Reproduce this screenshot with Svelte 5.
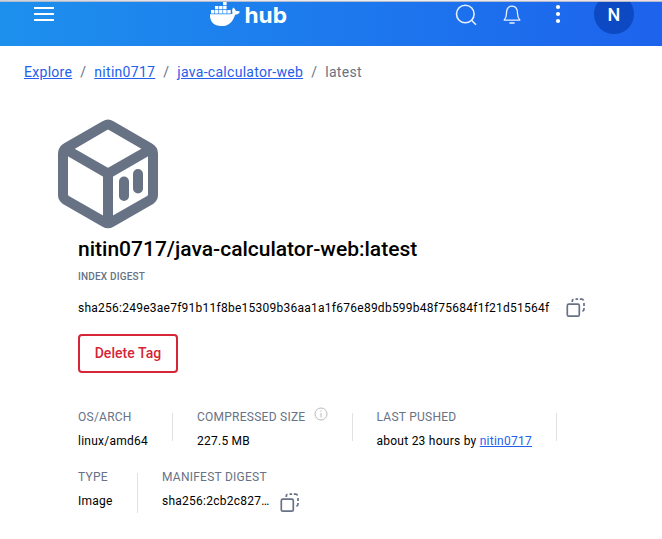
<script>
  const crumbs = ['Explore', 'nitin0717', 'java-calculator-web'];
</script>

{#snippet copyIcon()}
  <svg class="copy" width="20" height="20" viewBox="0 0 20 20" fill="none" stroke="#677285">
    <rect x="1.3" y="6.2" width="12" height="12" rx="1.5" stroke-width="1.7" />
    <path d="M6.3 4V2.8a1.5 1.5 0 0 1 1.2-1.5M9.5 1.2h2.6M13.8 1.2h2a2 2 0 0 1 1.7 1.3M18 5v3M18 10v1a2.2 2.2 0 0 1-1.6 2.2" stroke-width="1.7" />
  </svg>
{/snippet}

<div class="page">
  <div class="edge"></div>
  <header>
    <button class="menu" aria-label="Menu">
      <svg width="20" height="16" viewBox="0 0 20 16" fill="#fff">
        <path d="M0 1h20v2H0zM0 7h20v2H0zM0 13h20v2H0z" />
      </svg>
    </button>
    <div class="logo">
      <svg width="80" height="28" viewBox="0 0 80 28" fill="#fff">
        <path d="M13.1 0h3.5v3.3h-3.5zM5 4h3.4v3.2H5zM9.1 4h3.4v3.2H9.1zM13.1 4h3.5v3.2h-3.5zM1 8h3.4v3.6H1zM5 8h3.4v3.6H5zM9.1 8h3.4v3.6H9.1zM13.1 8h3.5v3.6h-3.5zM17.3 8h3.4v3.6h-3.4z" />
        <path d="M0 12.3h19.5c1.5 0 2.5-.4 3.2-1-.9-1.8-.8-4 .5-5.9 1.6 1 2.4 2.2 2.6 3.7 1.5-.3 3-.1 4.2.7-1 2-2.5 2.9-4.9 2.9C22.6 20.5 18.6 24 11.4 24 3.8 24-.3 20 0 12.3z" />
        <text x="34.5" y="20.5" textLength="42.5" lengthAdjust="spacingAndGlyphs">hub</text>
      </svg>
    </div>
    <nav>
      <svg width="22" height="22" viewBox="0 0 22 22" fill="none" stroke="#e6f0ff" stroke-width="1.6">
        <circle cx="10.3" cy="10" r="8.8" /><path d="M16.3 16l4.7 4.7" />
      </svg>
      <svg class="bell" width="18" height="20" viewBox="0 0 18 20" fill="none" stroke="#e6f0ff" stroke-width="1.3">
        <path d="M1.2 15.2c1.9-2.2 2.3-3.7 2.3-6.6C3.5 3.5 5.2 1.2 9 1.2s5.5 2.3 5.5 7.4c0 2.900.4 4.400 2.300 6.600z" stroke-linejoin="round" />
        <path d="M7 18h4" stroke-width="1.6" stroke-linecap="round" />
      </svg>
      <svg class="dots" width="6" height="20" viewBox="0 0 6 20" fill="#fff">
        <circle cx="3" cy="3" r="2.1" /><circle cx="3" cy="10" r="2.1" /><circle cx="3" cy="17" r="2.1" />
      </svg>
      <div class="avatar">N</div>
    </nav>
  </header>

  <div class="crumbs">
    {#each crumbs as c}<a href="#top">{c}</a><i>/</i>{/each}<span>latest</span>
  </div>

  <main>
    <svg class="cube" width="100" height="110" viewBox="0 0 100 110" fill="none" stroke="#677285" stroke-width="10">
      <path d="M47 7.5Q50 5.8 53 7.5L91 29.5Q95 31.7 95 35.5V77Q95 80 92 82L53 104.3Q50 106 47 104.3L8 82Q5 80 5 77V35.5Q5 31.7 9 29.5Z" />
      <path d="M8 31.5L50 55.7L92 31.5M50 54.5V104.5" />
      <path d="M66 63.5V78M80 56V70.5" stroke-linecap="round" />
    </svg>
    <h1>nitin0717/java-calculator-web:latest</h1>
    <div class="index">INDEX DIGEST</div>
    <div class="digest">
      <span>sha256:249e3ae7f91b11f8be15309b36aa1a1f676e89db599b48f75684f1f21d51564f</span>
      {@render copyIcon()}
    </div>
    <button class="delete">Delete Tag</button>
    <div class="facts">
      <div class="fact os"><b>OS/ARCH</b><p>linux/amd64</p></div>
      <div class="fact size">
        <b>COMPRESSED SIZE
          <svg width="14" height="14" viewBox="0 0 14 14" fill="none" stroke="#bbb">
            <circle cx="7" cy="7" r="6" /><path d="M7 6v4.5M7 3.6v1.2" />
          </svg>
        </b>
        <p>227.5 MB</p>
      </div>
      <div class="fact pushed"><b>LAST PUSHED</b><p>about 23 hours by <a href="#top">nitin0717</a></p></div>
    </div>
    <div class="facts second">
      <div class="fact type"><b>TYPE</b><p>Image</p></div>
      <div class="fact manifest"><b>MANIFEST DIGEST</b><p>sha256:2cb2c827… {@render copyIcon()}</p></div>
    </div>
  </main>
</div>

<style>
  :global(body) { margin: 0; background: #fff; }
  .page { width: 662px; height: 539px; overflow: hidden; font-family: Roboto, sans-serif; color: #000; background: #fff; }
  svg { display: block; flex: none; overflow: visible; }
  button { font: inherit; padding: 0; border: 0; background: none; }
  a { color: #2560ed; text-decoration: underline; }
  .edge { height: 2px; box-sizing: border-box; background: linear-gradient(90deg, #ccd1d8, #ece0ea 25%, #eee 60%, #f3dce4); border-bottom: 1px solid #aebccd; }
  header { height: 44px; display: flex; align-items: flex-start; background: linear-gradient(90deg, #1d90ed, #1d63ed); }
  .menu { margin: 4px 0 0 34px; width: 20px; }
  .logo { margin-left: 156px; }
  .logo text { font: 700 22px Inter, sans-serif; }
  nav { display: flex; align-items: flex-start; margin-left: 165px; padding-top: 2px; }
  .bell { margin: 1px 0 0 26px; }
  .dots { margin: 0 0 0 34px; }
  .avatar { width: 40px; height: 40px; margin: -10px 0 0 33px; border-radius: 50%; background: #0c49c2; color: #fff; font: 500 18px/41px Roboto, sans-serif; text-align: center; clip-path: inset(8px 0 0); }
  .crumbs { height: 20px; padding: 16px 0 0 24px; display: flex; font-size: 14px; line-height: 20px; letter-spacing: .29px; color: #677285; }
  .crumbs i { font-style: normal; margin: 0 8px; }
  main { padding: 36px 0 0 78px; }
  .cube { margin-left: -20px; }
  h1 { margin: 6px 0 0; font-size: 21px; line-height: 30px; font-weight: 500; }
  .index { margin-top: 5px; font-size: 10px; line-height: 16px; font-weight: 500; letter-spacing: .18px; color: #677285; }
  .digest { display: flex; align-items: center; gap: 17px; margin-top: 13px; height: 20px; font-size: 12px; letter-spacing: .25px; white-space: nowrap; }
  .delete { display: block; box-sizing: border-box; width: 100px; height: 39px; margin-top: 16px; padding-bottom: 1px; border: 2px solid #d52536; border-radius: 4px; color: #d52536; font-size: 14px; font-weight: 500; line-height: 34px; letter-spacing: .05px; }
  .facts { display: flex; margin-top: 34px; }
  .fact { flex: none; display: flex; flex-direction: column; gap: 4px; font-size: 12px; letter-spacing: .25px; line-height: 20px; height: 60px; white-space: nowrap; background: linear-gradient(#e1e2e6, #e1e2e6) right 6px / 1px 28px no-repeat; }
  .facts .fact + .fact { padding-left: 24px; box-sizing: border-box; }
  .os { width: 95px; }
  .size { width: 180px; }
  .facts .fact.pushed { width: 204px; padding-left: 23.5px; }
  .second { margin-top: 0; }
  .type { width: 60px; background-size: 1px 40px; }
  .fact.manifest { background: none; }
  b { font-weight: 400; color: #677285; display: flex; gap: 9px; height: 20px; }
  p { margin: 0; height: 20px; }
  .manifest p { display: flex; gap: 10px; }
  .manifest .copy { margin-top: 2px; }
</style>
